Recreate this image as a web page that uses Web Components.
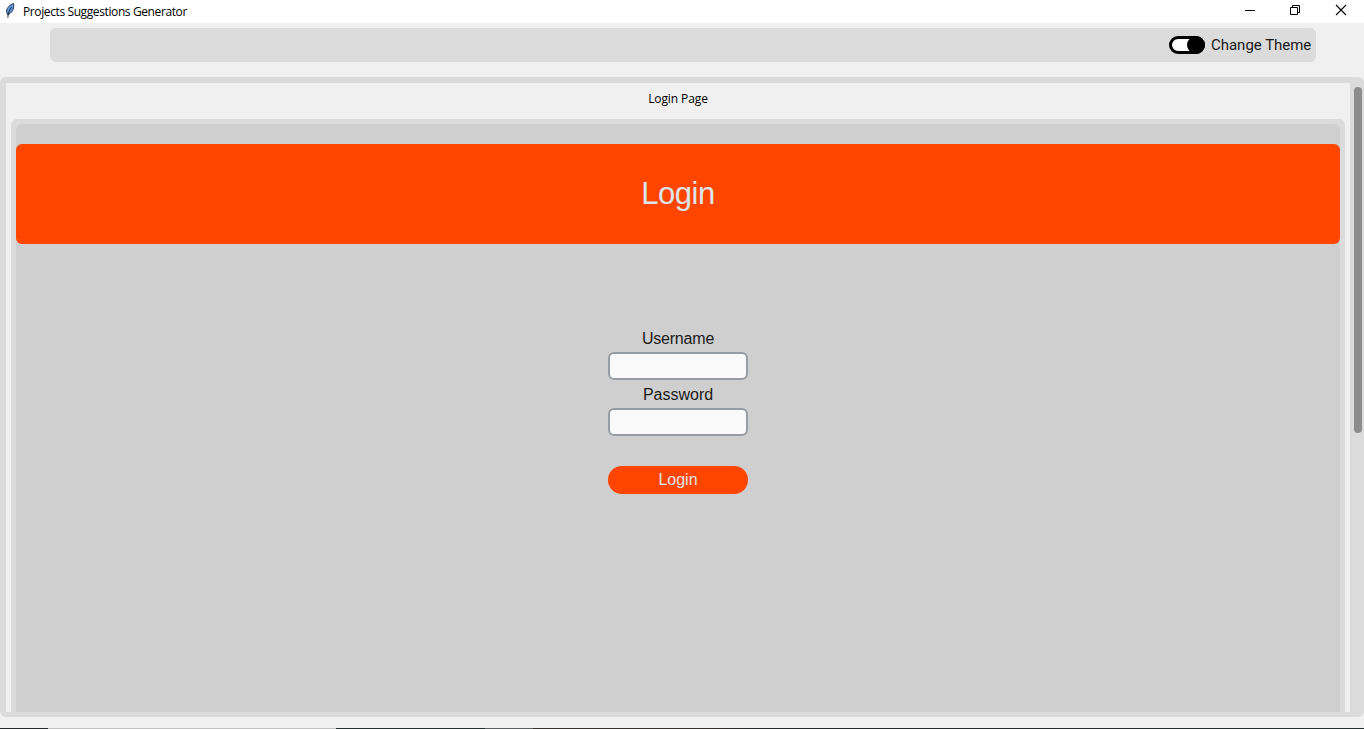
<!DOCTYPE html>
<html lang="en">
<head>
<meta charset="utf-8">
<title>Projects Suggestions Generator</title>
<style>html,body{margin:0;height:100%;overflow:hidden;background:#f0f0f0}</style>
</head>
<body>
<app-window></app-window>
<script>
const define = (name, html) => customElements.define(name, class extends HTMLElement {
  constructor() {
    super();
    this.attachShadow({ mode: 'open' }).innerHTML = html;
  }
});

define('title-bar', `
<style>
:host{display:flex;height:23px;background:#fff;box-sizing:border-box;padding-left:4px;color:#000;font:12px/23px "Open Sans",sans-serif}
.name{margin-left:6px;letter-spacing:-.39px;white-space:nowrap}
.feather{margin-top:2px;width:13px;height:17px}
.controls{margin-left:auto;display:flex}
.controls svg{width:46px;height:23px;display:block}
.controls svg:first-child{width:45px}
</style>
<svg class="feather" viewBox="0 0 13 17"><path d="M9.500 1.500 C6 2.500 2.800 5.500 2.500 9.500 L3.500 12.800 C8 11 10.500 7 9.500 1.500Z" fill="#5f9ae6" stroke="#1c2633" stroke-width=".9"/><path d="M7.500 5 C5.500 8 4.200 11 3.800 15.800" fill="none" stroke="#101010" stroke-width=".8"/></svg>
<span class="name"><slot></slot></span>
<div class="controls">
<svg viewBox="0 0 45 23"><path d="M18 10.500h10" stroke="#000"/></svg>
<svg viewBox="0 0 46 23"><path d="M18.500 7.500h7v7h-7zM20.500 7.500v-2h7v7h-2" fill="none" stroke="#000"/></svg>
<svg viewBox="0 0 46 23"><path d="M18 5l10 10M28 5l-10 10" fill="none" stroke="#000" stroke-width="1.100"/></svg>
</div>`);

define('theme-switch', `
<style>
:host{display:flex;align-items:center;gap:6px;color:#1a1a1a;font:15px/20px Roboto,sans-serif;white-space:nowrap}
.track{width:36px;height:18px;box-sizing:border-box;border:3px solid #000;border-radius:9px;background:#fff;display:flex;justify-content:flex-end}
.thumb{width:18px;height:18px;margin:-3px;border-radius:50%;background:#000}
.label{width:100px;letter-spacing:-.02px}
</style>
<span class="track"><span class="thumb"></span></span><span class="label"><slot></slot></span>`);

define('tool-bar', `
<style>
:host{display:flex;justify-content:flex-end;align-items:center;box-sizing:border-box;height:34px;margin:5px 48px 15px 50px;padding-right:5px;border-radius:6px;background:#dbdbdb}
</style><slot></slot>`);

define('scroll-frame', `
<style>
:host{display:flex;height:640px;box-sizing:border-box;background:#dbdbdb;border-radius:6px;padding:6px 2px 5px 6px}
.view{width:1344px;height:629px;background:#f0f0f0;overflow:hidden;display:flex;flex-direction:column}
.bar{width:8px;height:346px;margin:4px 0 0 4px;border-radius:4px;background:#8c8c8c}
</style>
<div class="view"><slot></slot></div><div class="bar"></div>`);

define('page-caption', `
<style>
:host{display:block;height:36px;text-align:center;color:#000;font:12px/31px "Open Sans",sans-serif;letter-spacing:-.1px}
</style><slot></slot>`);

define('card-frame', `
<style>
:host{display:block;margin:0 5px;padding:5px 5px 0;background:#dbdbdb;border-radius:6px 6px 0 0}
.inner{height:588px;box-sizing:border-box;padding-top:20px;background:#cfcfcf;border-radius:6px 6px 0 0}
</style>
<div class="inner"><slot></slot></div>`);

define('page-banner', `
<style>
:host{display:block;height:100px;border-radius:6px;background:#ff4500;color:#dce4ee;text-align:center;font:31px/99px "Liberation Sans",Arial,sans-serif;letter-spacing:-.5px}
</style><slot></slot>`);

define('text-field', `
<style>
:host{display:block;width:140px;height:56px;text-align:center;color:#1a1a1a;font:16px/28px "Liberation Sans",Arial,sans-serif}
label{display:block;height:28px;line-height:30px}
input{display:block;width:140px;height:28px;box-sizing:border-box;margin:0;padding:0 6px;border:2px solid #979da2;border-radius:6px;background:#f9f9fa;font:inherit;outline:none}
</style>
<label for="f"><slot></slot></label><input id="f">`);

define('pill-button', `
<style>
:host{display:block;width:140px;height:28px;margin-top:30px}
button{all:unset;display:block;width:140px;height:28px;border-radius:14px;background:#ff4500;color:#dce4ee;text-align:center;font:16px/28px "Liberation Sans",Arial,sans-serif}
</style><button><slot></slot></button>`);

define('login-form', `
<style>
:host{display:flex;flex-direction:column;align-items:center;padding-top:80px}
.user{letter-spacing:-.2px}
</style>
<text-field class="user">Username</text-field>
<text-field>Password</text-field>
<pill-button>Login</pill-button>`);

define('task-strip', `
<style>
:host{display:block;height:1px;margin-top:11px;background:linear-gradient(to right,#24282a 48px,#c0c0c0 48px 336px,#24302f 336px 485px,#5c5f60 485px 533px,#37302d 533px 700px,#24282a 760px,#243030)}
</style>`);

define('app-window', `
<style>
:host{display:flex;flex-direction:column;width:1364px;height:729px;background:#f0f0f0;overflow:hidden}
</style>
<title-bar>Projects Suggestions Generator</title-bar>
<tool-bar><theme-switch>Change Theme</theme-switch></tool-bar>
<scroll-frame>
  <page-caption>Login Page</page-caption>
  <card-frame>
    <page-banner>Login</page-banner>
    <login-form></login-form>
  </card-frame>
</scroll-frame>
<task-strip></task-strip>`);
</script>
</body>
</html>
